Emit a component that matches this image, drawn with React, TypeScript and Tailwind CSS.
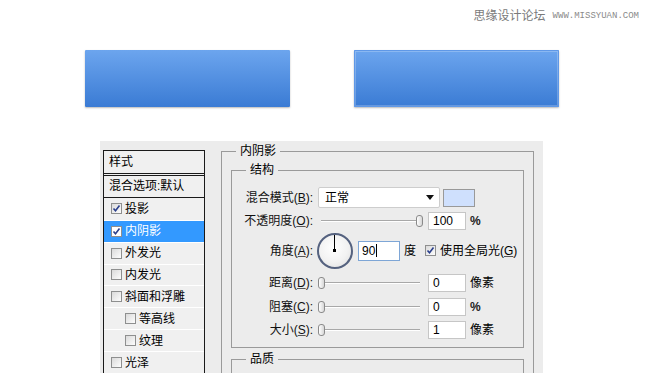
import React from "react";

const FONT = { fontFamily: '"Liberation Sans", "Noto Sans CJK SC", sans-serif' };

function Check({ checked, white }: { checked?: boolean; white?: boolean }) {
  return (
    <svg width="11" height="11" viewBox="0 0 11 11" className="shrink-0">
      <defs>
        <linearGradient id="cbg" x1="0" y1="0" x2="1" y2="1">
          <stop offset="0" stopColor="#d8d8d8" />
          <stop offset="1" stopColor="#ffffff" />
        </linearGradient>
      </defs>
      <rect x="0.5" y="0.5" width="10" height="10" fill={white ? "#ffffff" : "url(#cbg)"} stroke="#8e8f8f" />
      {checked && (
        <path d="M2.5 5.5 L4.5 7.8 L8.5 2.5" fill="none" stroke="#2a3f8c" strokeWidth="1.6" />
      )}
    </svg>
  );
}

function Group({ title, className, children }: { title: string; className?: string; children?: React.ReactNode }) {
  return (
    <div className={"relative border border-[#9a9a9a] " + (className ?? "")}>
      <span className="absolute -top-[9px] left-[14px] bg-[#ececec] px-[4px] text-[12px] leading-[16px] text-black">
        {title}
      </span>
      {children}
    </div>
  );
}

function Label({ text, k }: { text: string; k: string }) {
  return (
    <div className="w-[81px] shrink-0 text-right text-[12px] leading-[14px] text-[#111]">
      {text}(<span className="underline decoration-[#555]">{k}</span>):
    </div>
  );
}

function Slider({ knobLeft }: { knobLeft: boolean }) {
  return (
    <div className="relative h-[14px] w-[106px] shrink-0">
      <div className="absolute left-[3px] right-[4px] top-[6px] h-[1px] bg-[#a8a8a8]" />
      <div className="absolute left-[3px] right-[4px] top-[7px] h-[1px] bg-[#ffffff]" />
      <div
        className={
          "absolute top-[1px] h-[12px] w-[7px] rounded-[3px] border border-[#8a8a8a] bg-gradient-to-r from-[#ffffff] to-[#d6d6d6] " +
          (knobLeft ? "left-[0px]" : "left-[98px]")
        }
      />
    </div>
  );
}

function Box({ value, className }: { value: string; className?: string }) {
  return (
    <div
      className={
        "flex h-[18px] w-[38px] shrink-0 items-center border border-[#c6c6c6] bg-white pl-[4px] text-[12px] text-black " +
        (className ?? "")
      }
    >
      {value}
    </div>
  );
}

const items: { t: string; c?: boolean; sel?: boolean; ind?: boolean }[] = [
  { t: "投影", c: true },
  { t: "内阴影", c: true, sel: true },
  { t: "外发光" },
  { t: "内发光" },
  { t: "斜面和浮雕" },
  { t: "等高线", ind: true },
  { t: "纹理", ind: true },
  { t: "光泽" },
];

export default function App() {
  return (
    <div className="relative h-[390px] w-[650px] overflow-hidden bg-white" style={FONT}>
      {/* watermark */}
      <div className="flex h-[32px] items-center justify-end pr-[11px]">
        <span className="text-[12px] leading-[14px] text-[#7a7a7a]">思缘设计论坛</span>
        <span
          className="ml-[7px] text-[9px] leading-[10px] text-[#8a8a8a]"
          style={{ fontFamily: '"Liberation Mono", monospace' }}
        >
          WWW.MISSYUAN.COM
        </span>
      </div>

      {/* buttons */}
      <div className="mt-[18px] flex pl-[85px]">
        <div className="h-[57px] w-[205px] rounded-[1px] bg-gradient-to-b from-[#6ca5ee] to-[#3a7bd4] shadow-[0_1px_2px_rgba(0,0,0,0.28)]" />
        <div className="ml-[64px] h-[57px] w-[205px] rounded-[1px] bg-gradient-to-b from-[#6ca5ee] to-[#3a7bd4] shadow-[0_1px_2px_rgba(0,0,0,0.28),inset_0_0_0_1px_#5f98e7,inset_0_0_0_2px_rgba(255,255,255,0.22)]" />
      </div>

      {/* panel */}
      <div className="ml-[100px] mt-[34px] flex h-[232px] w-[443px] items-start overflow-hidden bg-[#ececec]">
        {/* style list */}
        <div className="ml-[3px] mt-[9px] flex w-[102px] shrink-0 flex-col self-stretch border-x border-[#1a1a1a] bg-[#f0f0f0]">
          <div className="flex h-[26px] items-center border-t border-b-[3px] border-double border-t-[#1a1a1a] border-b-[#1a1a1a] pl-[5px] text-[12px] text-black">
            样式
          </div>
          <div className="flex h-[22px] items-center border-b border-[#1a1a1a] pl-[5px] text-[12px] text-black">
            混合选项:默认
          </div>
          {items.map((it, i) => (
            <div
              key={it.t}
              className={
                "flex h-[22px] items-center text-[12px] " +
                (i > 0 ? "border-t border-white " : "") +
                (it.sel ? "bg-[#3399ff] text-white" : "text-black")
              }
            >
              <div className={it.ind ? "ml-[21px]" : "ml-[7px]"}>
                <Check checked={it.c} white={it.sel} />
              </div>
              <span className="ml-[3px]">{it.t}</span>
            </div>
          ))}
        </div>

        {/* right side */}
        <Group title="内阴影" className="ml-[16px] mt-[10px] w-[313px] shrink-0 px-[9px] pt-[18px]">
          <Group title="结构" className="w-[293px] pb-[6px] pt-[16px]">
            {/* blend mode */}
            <div className="flex h-[21px] items-center">
              <Label text="混合模式" k="B" />
              <div className="ml-[5px] flex h-[21px] w-[122px] shrink-0 items-center justify-between rounded-[2px] border border-[#cdcdcd] bg-white pl-[6px] pr-[5px] text-[12px] text-black">
                <span>正常</span>
                <svg width="8" height="5" viewBox="0 0 8 5">
                  <path d="M0 0 H8 L4 5 Z" fill="#111" />
                </svg>
              </div>
              <div className="ml-[3px] h-[18px] w-[32px] shrink-0 border border-[#999] bg-[#cfe0fd]" />
            </div>
            {/* opacity */}
            <div className="flex h-[25px] items-center">
              <Label text="不透明度" k="O" />
              <div className="ml-[5px] flex items-center">
                <Slider knobLeft={false} />
                <Box value="100" className="ml-[4px]" />
                <span className="ml-[4px] text-[12px] font-bold text-[#222]">%</span>
              </div>
            </div>
            {/* angle */}
            <div className="flex h-[35px] items-center">
              <Label text="角度" k="A" />
              <div className="ml-[4px] flex items-center">
                <div className="relative h-[36px] w-[36px] shrink-0 rounded-full border-[2px] border-[#55627f] bg-[radial-gradient(circle_at_45%_40%,#ffffff_0%,#f2f2f2_55%,#dcdcdc_100%)]">
                  <div className="absolute left-[15px] top-0 h-[16px] w-[1px] bg-black" />
                  <div className="absolute left-[14px] top-[14px] h-[3px] w-[3px] bg-black" />
                </div>
                <div className="ml-[5px] flex h-[20px] w-[42px] shrink-0 items-center border border-[#7ea6d6] bg-white pl-[3px] text-[12px] text-black">
                  90<span className="ml-[1px] h-[13px] w-[1px] bg-black" />
                </div>
                <span className="ml-[4px] text-[12px] text-black">度</span>
                <div className="ml-[9px]">
                  <Check checked />
                </div>
                <span className="ml-[4px] text-[12px] text-black">
                  使用全局光(<span className="underline decoration-[#555]">G</span>)
                </span>
              </div>
            </div>
            {/* distance */}
            <div className="mt-[3px] flex h-[24px] items-center">
              <Label text="距离" k="D" />
              <div className="ml-[5px] flex items-center">
                <Slider knobLeft />
                <Box value="0" className="ml-[4px]" />
                <span className="ml-[4px] text-[12px] text-black">像素</span>
              </div>
            </div>
            {/* choke */}
            <div className="flex h-[23px] items-center">
              <Label text="阻塞" k="C" />
              <div className="ml-[5px] flex items-center">
                <Slider knobLeft />
                <Box value="0" className="ml-[4px]" />
                <span className="ml-[4px] text-[12px] font-bold text-[#222]">%</span>
              </div>
            </div>
            {/* size */}
            <div className="flex h-[23px] items-center">
              <Label text="大小" k="S" />
              <div className="ml-[5px] flex items-center">
                <Slider knobLeft />
                <Box value="1" className="ml-[4px]" />
                <span className="ml-[4px] text-[12px] text-black">像素</span>
              </div>
            </div>
          </Group>
          <Group title="品质" className="mt-[11px] h-[40px] w-[293px]" />
        </Group>
      </div>
    </div>
  );
}
